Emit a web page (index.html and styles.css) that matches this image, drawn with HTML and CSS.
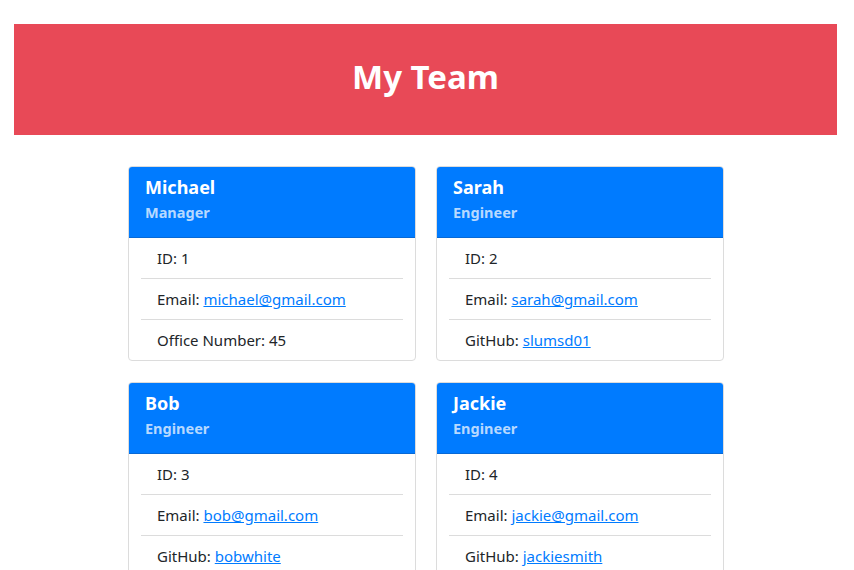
FILE: index.html
```html
<!DOCTYPE html>
<html lang="en">
<head>
<meta charset="utf-8">
<title>My Team</title>
<link rel="stylesheet" href="styles.css">
</head>
<body>
<div class="page">
  <header class="banner">
    <h1 class="banner-title">My Team</h1>
  </header>
  <main class="team">
    <div class="card">
      <div class="card-header">
        <h2 class="card-name">Michael</h2>
        <h3 class="card-role">Manager</h3>
      </div>
      <ul class="info-list">
        <li class="info-item">ID: 1</li>
        <li class="info-item">Email: <a href="#">michael@gmail.com</a></li>
        <li class="info-item">Office Number: 45</li>
      </ul>
    </div>
    <div class="card">
      <div class="card-header">
        <h2 class="card-name">Sarah</h2>
        <h3 class="card-role">Engineer</h3>
      </div>
      <ul class="info-list">
        <li class="info-item">ID: 2</li>
        <li class="info-item">Email: <a href="#">sarah@gmail.com</a></li>
        <li class="info-item">GitHub: <a href="#">slumsd01</a></li>
      </ul>
    </div>
    <div class="card">
      <div class="card-header">
        <h2 class="card-name">Bob</h2>
        <h3 class="card-role">Engineer</h3>
      </div>
      <ul class="info-list">
        <li class="info-item">ID: 3</li>
        <li class="info-item">Email: <a href="#">bob@gmail.com</a></li>
        <li class="info-item">GitHub: <a href="#">bobwhite</a></li>
      </ul>
    </div>
    <div class="card">
      <div class="card-header">
        <h2 class="card-name">Jackie</h2>
        <h3 class="card-role">Engineer</h3>
      </div>
      <ul class="info-list">
        <li class="info-item">ID: 4</li>
        <li class="info-item">Email: <a href="#">jackie@gmail.com</a></li>
        <li class="info-item">GitHub: <a href="#">jackiesmith</a></li>
      </ul>
    </div>
  </main>
</div>
</body>
</html>
```
FILE: styles.css
```css
* {
  box-sizing: border-box;
}

body {
  margin: 0;
  background: #ffffff;
  color: #212529;
  font-family: "Noto Sans", "Open Sans", sans-serif;
  font-size: 15px;
  line-height: 24px;
}

.page {
  width: 854px;
  padding: 24px 17px 40px 14px;
}

.banner {
  height: 111px;
  background: #e84957;
  display: flex;
  align-items: center;
  justify-content: center;
  padding-bottom: 6px;
}

.banner-title {
  margin: 0;
  color: #ffffff;
  font-size: 33px;
  line-height: 40px;
  font-weight: 700;
}

.team {
  width: 596px;
  margin: 31px 0 0 114px;
  display: grid;
  grid-template-columns: 288px 288px;
  column-gap: 20px;
  row-gap: 21px;
}

.card {
  border: 1px solid #dcdcdc;
  border-radius: 4px;
  background: #ffffff;
  overflow: hidden;
}

.card-header {
  background: #007bff;
  border-bottom: 1px solid #0769d6;
  padding: 8px 16px 13px;
}

.card-name {
  margin: 0 0 1px;
  color: #ffffff;
  font-size: 18px;
  line-height: 24px;
  font-weight: 700;
}

.card-role {
  margin: 0;
  color: rgba(255, 255, 255, 0.72);
  font-size: 14.5px;
  line-height: 24px;
  font-weight: 700;
}

.info-list {
  list-style: none;
  margin: 0 12px;
  padding: 0;
}

.info-item {
  padding: 8px 16px;
  border-bottom: 1px solid #dcdcdc;
  line-height: 24px;
}

.info-item:last-child {
  border-bottom: none;
}

.info-item a {
  color: #007bff;
  text-decoration: underline;
}
```
